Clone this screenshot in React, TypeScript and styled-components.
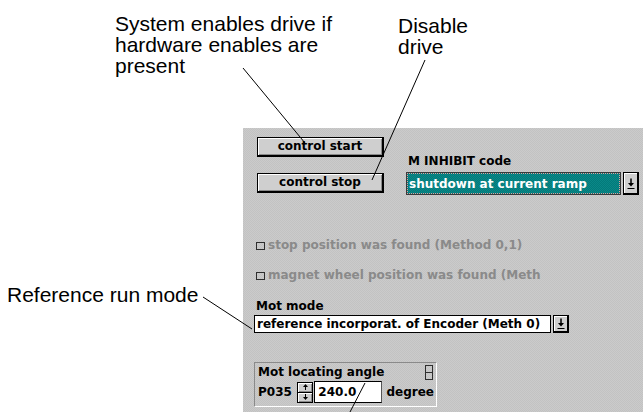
import React from "react";
import styled, { createGlobalStyle } from "styled-components";

const GlobalStyle = createGlobalStyle`
  html, body {
    margin: 0;
    padding: 0;
    background: #fff;
  }
`;

const Page = styled.div`
  position: relative;
  width: 643px;
  height: 412px;
  overflow: hidden;
  background: #fff;
  font-family: "Liberation Sans", Arial, sans-serif;
`;

const Header = styled.div`
  display: flex;
  height: 128px;
  padding-left: 115px;
  box-sizing: border-box;
`;

const Callout = styled.div<{ $top: number; $width?: number }>`
  font-size: 21px;
  line-height: 21px;
  color: #000;
  padding-top: ${(p) => p.$top}px;
  width: ${(p) => (p.$width ? `${p.$width}px` : "auto")};
  flex-shrink: 0;
`;

const Main = styled.div`
  display: flex;
  height: 284px;
`;

const SideNotes = styled.div`
  width: 243px;
  flex-shrink: 0;
  padding: 156px 0 0 7px;
  box-sizing: border-box;
`;

const Panel = styled.div`
  flex: 1;
  padding: 9px 0 0 11px;
  background-color: #c6c6c6;
  background-image: repeating-conic-gradient(#c2c2c2 0 25%, #cbcbcb 0 50%);
  background-size: 2px 2px;
  font-family: "DejaVu Sans", Verdana, sans-serif;
  font-weight: bold;
  font-size: 12px;
  line-height: 14px;
  color: #000;
`;

const TopRow = styled.div`
  display: flex;
  align-items: flex-start;
`;

const ButtonStack = styled.div`
  display: flex;
  flex-direction: column;
  gap: 16px;
  margin-left: 3px;
`;

const PushButton = styled.button`
  width: 127px;
  height: 20px;
  box-sizing: border-box;
  padding: 0;
  border: 1px solid #000;
  border-right-width: 2px;
  border-bottom-width: 2px;
  background: #cfcfcf;
  box-shadow: inset 1px 1px #fff, inset -1px -1px #8a8a8a;
  font: inherit;
  color: #000;
  line-height: 15px;
`;

const InhibitBlock = styled.div`
  margin: 17px 0 0 22px;
`;

const FieldLabel = styled.div`
  padding-left: 2px;
`;

const Combo = styled.div<{ $width: number; $height: number; $teal?: boolean }>`
  display: flex;
  width: ${(p) => p.$width}px;
  height: ${(p) => p.$height}px;
  margin-top: ${(p) => (p.$teal ? 4 : 2)}px;
  box-sizing: border-box;
`;

const ComboText = styled.div<{ $teal?: boolean }>`
  flex: 1;
  display: flex;
  align-items: center;
  padding-left: 2px;
  border: 1px solid ${(p) => (p.$teal ? "#3a3a3a" : "#000")};
  white-space: nowrap;
  overflow: hidden;
  color: ${(p) => (p.$teal ? "#fff" : "#000")};
  background-color: ${(p) => (p.$teal ? "#058080" : "#fff")};
  background-image: ${(p) =>
    p.$teal ? "repeating-conic-gradient(#037a7a 0 25%, #0a8888 0 50%)" : "none"};
  background-size: 2px 2px;
  outline: ${(p) => (p.$teal ? "1px dotted #e4a0a0" : "none")};
  outline-offset: -2px;
`;

const ComboButton = styled.div`
  width: 16px;
  margin-left: 2px;
  display: flex;
  align-items: center;
  justify-content: center;
  box-sizing: border-box;
  border: 1px solid #000;
  border-right-width: 2px;
  border-bottom-width: 2px;
  background: #cfcfcf;
  box-shadow: inset 1px 1px #fff;
`;

const CheckList = styled.div`
  display: flex;
  flex-direction: column;
  gap: 16px;
  margin-top: 43px;
  padding-left: 2px;
  color: #8a8a8a;
`;

const CheckRow = styled.div`
  display: flex;
  align-items: center;
  gap: 3px;
`;

const CheckBox = styled.span`
  width: 9px;
  height: 8px;
  box-sizing: border-box;
  border: 1px solid #2e2e2e;
  margin-top: 1px;
`;

const ModeBlock = styled.div`
  margin-top: 17px;
`;

const GroupBox = styled.div`
  width: 183px;
  margin-top: 29px;
  box-sizing: border-box;
  border: 1px solid #fff;
  border-top-color: #8a8a8a;
  border-left-color: #8a8a8a;
  padding: 1px 2px 3px 3px;
`;

const GroupHead = styled.div`
  display: flex;
  justify-content: space-between;
  align-items: center;
  height: 16px;
`;

const TwinBoxes = styled.div`
  display: flex;
  flex-direction: column;
  margin-right: 1px;
  & > span {
    width: 8px;
    height: 8px;
    box-sizing: border-box;
    border: 1px solid #2e2e2e;
  }
  & > span + span {
    margin-top: -1px;
  }
`;

const ParamRow = styled.div`
  display: flex;
  align-items: center;
  height: 22px;
  margin-top: 1px;
`;

const Spinner = styled.div`
  display: flex;
  flex-direction: column;
  width: 17px;
  height: 21px;
  margin-left: 5px;
`;

const SpinHalf = styled.div`
  flex: 1;
  display: flex;
  align-items: center;
  justify-content: center;
  box-sizing: border-box;
  border: 1px solid #000;
  background: #cfcfcf;
  box-shadow: inset 1px 1px #fff, inset -1px -1px #8a8a8a;
  & + & {
    margin-top: -1px;
  }
`;

const ValueInput = styled.div`
  width: 70px;
  height: 22px;
  margin-left: 1px;
  box-sizing: border-box;
  border: 1px solid #000;
  border-right-color: #555;
  background: #fff;
  padding: 3px 0 0 3px;
`;

const Unit = styled.span`
  margin-left: 4px;
`;

const Leaders = styled.svg`
  position: absolute;
  left: 0;
  top: 0;
  pointer-events: none;
`;

const DropArrow = () => (
  <svg width="8" height="11" viewBox="0 0 8 11">
    <path d="M4 0.5V7" stroke="#000" strokeWidth="1.5" />
    <path d="M1 5H7L4 8.5Z" fill="#000" />
    <path d="M0.5 10.5H7.5" stroke="#000" strokeWidth="1" />
  </svg>
);

const SpinArrow = ({ down }: { down?: boolean }) => (
  <svg width="5" height="6" viewBox="0 0 5 6" style={{ transform: down ? "rotate(180deg)" : undefined }}>
    <path d="M2.5 0L5 3H0Z" fill="#000" />
    <path d="M2.5 2V6" stroke="#000" strokeWidth="1" />
  </svg>
);

export default function App() {
  return (
    <Page>
      <GlobalStyle />
      <Header>
        <Callout $top={13} $width={283}>
          System enables drive if
          <br />
          hardware enables are
          <br />
          present
        </Callout>
        <Callout $top={15}>
          Disable
          <br />
          drive
        </Callout>
      </Header>
      <Main>
        <SideNotes>
          <Callout $top={0}>Reference run mode</Callout>
        </SideNotes>
        <Panel>
          <TopRow>
            <ButtonStack>
              <PushButton>control start</PushButton>
              <PushButton>control stop</PushButton>
            </ButtonStack>
            <InhibitBlock>
              <FieldLabel>M INHIBIT code</FieldLabel>
              <Combo $width={233} $height={23} $teal>
                <ComboText $teal>shutdown at current ramp</ComboText>
                <ComboButton>
                  <DropArrow />
                </ComboButton>
              </Combo>
            </InhibitBlock>
          </TopRow>

          <CheckList>
            <CheckRow>
              <CheckBox />
              stop position was found (Method 0,1)
            </CheckRow>
            <CheckRow>
              <CheckBox />
              magnet wheel position was found (Meth
            </CheckRow>
          </CheckList>

          <ModeBlock>
            <FieldLabel>Mot mode</FieldLabel>
            <Combo $width={315} $height={18}>
              <ComboText>reference incorporat. of Encoder (Meth 0)</ComboText>
              <ComboButton>
                <DropArrow />
              </ComboButton>
            </Combo>
          </ModeBlock>

          <GroupBox>
            <GroupHead>
              <span>Mot locating angle</span>
              <TwinBoxes>
                <span />
                <span />
              </TwinBoxes>
            </GroupHead>
            <ParamRow>
              <span>P035</span>
              <Spinner>
                <SpinHalf>
                  <SpinArrow />
                </SpinHalf>
                <SpinHalf>
                  <SpinArrow down />
                </SpinHalf>
              </Spinner>
              <ValueInput>240.0</ValueInput>
              <Unit>degree</Unit>
            </ParamRow>
          </GroupBox>
        </Panel>
      </Main>
      <Leaders width="643" height="412" viewBox="0 0 643 412">
        <g stroke="#000" strokeWidth="1" fill="none">
          <line x1="243" y1="68" x2="305" y2="143" />
          <line x1="425" y1="60" x2="372" y2="180" />
          <line x1="203" y1="297" x2="252" y2="329" />
          <line x1="365" y1="383" x2="350" y2="412" />
        </g>
      </Leaders>
    </Page>
  );
}
